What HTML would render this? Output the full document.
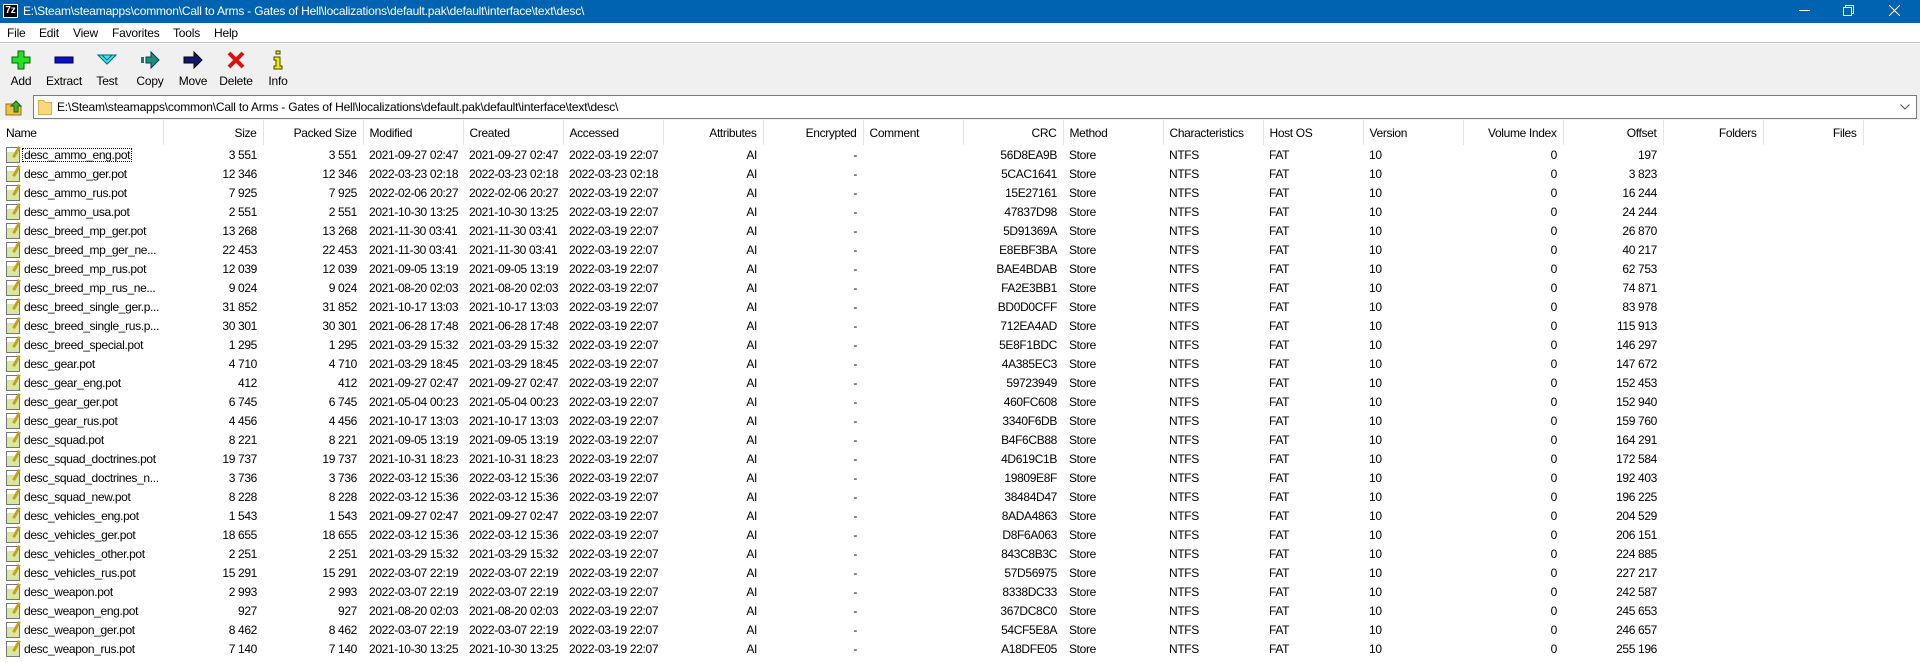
<!DOCTYPE html>
<html><head><meta charset="utf-8"><style>
*{margin:0;padding:0;box-sizing:border-box}
body{width:1920px;height:662px;overflow:hidden;background:#fff;font-family:"Liberation Sans",sans-serif;font-size:12px;color:#000;position:relative;letter-spacing:-0.2px}
.title{position:absolute;left:0;top:0;width:1920px;height:23px;background:#0063b1;color:#fff}
.title .t{position:absolute;left:23px;top:4px;font-size:12px}
.logo{position:absolute;left:3px;top:4px;width:15px;height:14px;background:#000;border:1px solid #fff;color:#fff;font-size:10px;font-weight:bold;line-height:12px;text-align:center}
.menu{position:absolute;top:23px;left:0;width:1920px;height:20px;border-bottom:1px solid #c8c8c8}
.menu span{position:absolute;top:3px}
.tb{position:absolute;top:44px;left:0;width:1920px;height:50px;background:#f0f0f0}
.tb .b{position:absolute;top:0;width:44px;text-align:center}
.tb svg{display:block;margin:6px auto 0}
.tb .l{position:absolute;top:30px;width:100%;text-align:center}
.ab{position:absolute;top:94px;left:0;width:1920px;height:26px;background:#f0f0f0}
.addr{position:absolute;left:33px;top:1px;width:1884px;height:24px;border:1px solid #7a7a7a;background:#fff}
.addr .t{position:absolute;left:23px;top:4px}
table{position:absolute;left:0;top:120px;border-collapse:collapse;table-layout:fixed;width:1920px;letter-spacing:-0.35px}
td,th{height:19px;padding:0 6px;white-space:nowrap;overflow:hidden;font-weight:normal}
th{height:25px;border-right:1px solid #e5e5e5;text-align:left}
th.r,td.r{text-align:right}
td.n{padding-left:24px;position:relative}
td.n:before{content:"";position:absolute;left:6px;top:2px;width:12px;height:14px;border:1px solid #777;background:linear-gradient(#fff 0 30%,#d8e8a0 30% 100%)}
td.n:after{content:"";position:absolute;left:15px;top:1px;width:3px;height:12px;background:#c8a020;transform:rotate(30deg)}
.f{outline:1px dotted #000;outline-offset:-1px;padding:0 2px;margin-left:-2px}
</style></head><body>
<div class="title"><div class="logo">7z</div><span class="t">E:\Steam\steamapps\common\Call to Arms - Gates of Hell\localizations\default.pak\default\interface\text\desc\</span>
<svg style="position:absolute;left:1799px;top:10px" width="11" height="2"><rect width="11" height="1" fill="#fff"/></svg>
<svg style="position:absolute;left:1843px;top:5px" width="11" height="11"><path d="M0.5 2.5h8v8h-8zM2.5 2.5v-2h8v8h-2" fill="none" stroke="#fff"/></svg>
<svg style="position:absolute;left:1889px;top:5px" width="11" height="11"><path d="M0 0L11 11M11 0L0 11" stroke="#fff"/></svg>
</div>
<div class="menu"><span style="left:7px">File</span><span style="left:39px">Edit</span><span style="left:73px">View</span><span style="left:112px">Favorites</span><span style="left:173px">Tools</span><span style="left:214px">Help</span></div>
<div class="tb">
<div class="b" style="left:-1px"><svg width="20" height="20"><path d="M7 1h6v6h6v6h-6v6h-6v-6h-6v-6h6z" fill="#22e022" stroke="#060" stroke-width="1"/></svg><div class="l">Add</div></div>
<div class="b" style="left:42px"><svg width="20" height="20"><rect x="1" y="7" width="18" height="6" fill="#0a10d0" stroke="#003"/></svg><div class="l">Extract</div></div>
<div class="b" style="left:85px"><svg width="20" height="20"><path d="M1 5h18l-9 9z" fill="#3ee8f0" stroke="#066"/><path d="M5 5l5 5 5-5" fill="none" stroke="#066"/></svg><div class="l">Test</div></div>
<div class="b" style="left:128px"><svg width="20" height="20"><rect x="1" y="7" width="3" height="6" fill="#1a7a6a"/><path d="M6 7h5v-5l8 8-8 8v-5h-5z" fill="#1e8a80" stroke="#044"/></svg><div class="l">Copy</div></div>
<div class="b" style="left:171px"><svg width="20" height="20"><path d="M1 7h10v-5l8 8-8 8v-5h-10z" fill="#101870" stroke="#000"/></svg><div class="l">Move</div></div>
<div class="b" style="left:214px"><svg width="20" height="20"><path d="M3 3L17 17M17 3L3 17" stroke="#e01010" stroke-width="4"/></svg><div class="l">Delete</div></div>
<div class="b" style="left:256px"><svg width="20" height="20"><rect x="8" y="1" width="4" height="3" fill="#ee0" stroke="#440"/><path d="M6 7h6v9h2v3h-8v-3h2v-6h-2z" fill="#ee0" stroke="#440"/></svg><div class="l">Info</div></div>
</div>
<div class="ab">
<svg style="position:absolute;left:5px;top:4px" width="18" height="18"><path d="M1 6h6l2 2h7v9h-15z" fill="#f0c040" stroke="#a07010"/><path d="M9 14v-6h-3l5-5 5 5h-3v6z" fill="#40b030" stroke="#206010"/></svg>
<div class="addr"><svg style="position:absolute;left:4px;top:3px" width="14" height="16"><path d="M0.5 1.5h5l2 2h6v12h-13z" fill="#f8d878" stroke="#d8b050"/></svg><span class="t">E:\Steam\steamapps\common\Call to Arms - Gates of Hell\localizations\default.pak\default\interface\text\desc\</span>
<svg style="position:absolute;right:6px;top:8px" width="10" height="6"><path d="M0.5 0.5l4.5 4.5 4.5-4.5" fill="none" stroke="#555"/></svg></div>
</div>
<table>
<colgroup><col style="width:163px"><col style="width:100px"><col style="width:100px"><col style="width:100px"><col style="width:100px"><col style="width:100px"><col style="width:100px"><col style="width:100px"><col style="width:100px"><col style="width:100px"><col style="width:100px"><col style="width:100px"><col style="width:100px"><col style="width:100px"><col style="width:100px"><col style="width:100px"><col style="width:100px"><col style="width:100px"><col></colgroup>
<tr><th>Name</th><th class="r">Size</th><th class="r">Packed Size</th><th>Modified</th><th>Created</th><th>Accessed</th><th class="r">Attributes</th><th class="r">Encrypted</th><th>Comment</th><th class="r">CRC</th><th>Method</th><th>Characteristics</th><th>Host OS</th><th>Version</th><th class="r">Volume Index</th><th class="r">Offset</th><th class="r">Folders</th><th class="r">Files</th><th style="border:0"></th></tr>
<tr><td class="n"><span class="f">desc_ammo_eng.pot</span></td><td class="r">3 551</td><td class="r">3 551</td><td>2021-09-27 02:47</td><td>2021-09-27 02:47</td><td>2022-03-19 22:07</td><td class="r">AI</td><td class="r">-</td><td></td><td class="r">56D8EA9B</td><td>Store</td><td>NTFS</td><td>FAT</td><td>10</td><td class="r">0</td><td class="r">197</td><td></td><td></td><td></td></tr>
<tr><td class="n">desc_ammo_ger.pot</td><td class="r">12 346</td><td class="r">12 346</td><td>2022-03-23 02:18</td><td>2022-03-23 02:18</td><td>2022-03-23 02:18</td><td class="r">AI</td><td class="r">-</td><td></td><td class="r">5CAC1641</td><td>Store</td><td>NTFS</td><td>FAT</td><td>10</td><td class="r">0</td><td class="r">3 823</td><td></td><td></td><td></td></tr>
<tr><td class="n">desc_ammo_rus.pot</td><td class="r">7 925</td><td class="r">7 925</td><td>2022-02-06 20:27</td><td>2022-02-06 20:27</td><td>2022-03-19 22:07</td><td class="r">AI</td><td class="r">-</td><td></td><td class="r">15E27161</td><td>Store</td><td>NTFS</td><td>FAT</td><td>10</td><td class="r">0</td><td class="r">16 244</td><td></td><td></td><td></td></tr>
<tr><td class="n">desc_ammo_usa.pot</td><td class="r">2 551</td><td class="r">2 551</td><td>2021-10-30 13:25</td><td>2021-10-30 13:25</td><td>2022-03-19 22:07</td><td class="r">AI</td><td class="r">-</td><td></td><td class="r">47837D98</td><td>Store</td><td>NTFS</td><td>FAT</td><td>10</td><td class="r">0</td><td class="r">24 244</td><td></td><td></td><td></td></tr>
<tr><td class="n">desc_breed_mp_ger.pot</td><td class="r">13 268</td><td class="r">13 268</td><td>2021-11-30 03:41</td><td>2021-11-30 03:41</td><td>2022-03-19 22:07</td><td class="r">AI</td><td class="r">-</td><td></td><td class="r">5D91369A</td><td>Store</td><td>NTFS</td><td>FAT</td><td>10</td><td class="r">0</td><td class="r">26 870</td><td></td><td></td><td></td></tr>
<tr><td class="n">desc_breed_mp_ger_ne...</td><td class="r">22 453</td><td class="r">22 453</td><td>2021-11-30 03:41</td><td>2021-11-30 03:41</td><td>2022-03-19 22:07</td><td class="r">AI</td><td class="r">-</td><td></td><td class="r">E8EBF3BA</td><td>Store</td><td>NTFS</td><td>FAT</td><td>10</td><td class="r">0</td><td class="r">40 217</td><td></td><td></td><td></td></tr>
<tr><td class="n">desc_breed_mp_rus.pot</td><td class="r">12 039</td><td class="r">12 039</td><td>2021-09-05 13:19</td><td>2021-09-05 13:19</td><td>2022-03-19 22:07</td><td class="r">AI</td><td class="r">-</td><td></td><td class="r">BAE4BDAB</td><td>Store</td><td>NTFS</td><td>FAT</td><td>10</td><td class="r">0</td><td class="r">62 753</td><td></td><td></td><td></td></tr>
<tr><td class="n">desc_breed_mp_rus_ne...</td><td class="r">9 024</td><td class="r">9 024</td><td>2021-08-20 02:03</td><td>2021-08-20 02:03</td><td>2022-03-19 22:07</td><td class="r">AI</td><td class="r">-</td><td></td><td class="r">FA2E3BB1</td><td>Store</td><td>NTFS</td><td>FAT</td><td>10</td><td class="r">0</td><td class="r">74 871</td><td></td><td></td><td></td></tr>
<tr><td class="n">desc_breed_single_ger.p...</td><td class="r">31 852</td><td class="r">31 852</td><td>2021-10-17 13:03</td><td>2021-10-17 13:03</td><td>2022-03-19 22:07</td><td class="r">AI</td><td class="r">-</td><td></td><td class="r">BD0D0CFF</td><td>Store</td><td>NTFS</td><td>FAT</td><td>10</td><td class="r">0</td><td class="r">83 978</td><td></td><td></td><td></td></tr>
<tr><td class="n">desc_breed_single_rus.p...</td><td class="r">30 301</td><td class="r">30 301</td><td>2021-06-28 17:48</td><td>2021-06-28 17:48</td><td>2022-03-19 22:07</td><td class="r">AI</td><td class="r">-</td><td></td><td class="r">712EA4AD</td><td>Store</td><td>NTFS</td><td>FAT</td><td>10</td><td class="r">0</td><td class="r">115 913</td><td></td><td></td><td></td></tr>
<tr><td class="n">desc_breed_special.pot</td><td class="r">1 295</td><td class="r">1 295</td><td>2021-03-29 15:32</td><td>2021-03-29 15:32</td><td>2022-03-19 22:07</td><td class="r">AI</td><td class="r">-</td><td></td><td class="r">5E8F1BDC</td><td>Store</td><td>NTFS</td><td>FAT</td><td>10</td><td class="r">0</td><td class="r">146 297</td><td></td><td></td><td></td></tr>
<tr><td class="n">desc_gear.pot</td><td class="r">4 710</td><td class="r">4 710</td><td>2021-03-29 18:45</td><td>2021-03-29 18:45</td><td>2022-03-19 22:07</td><td class="r">AI</td><td class="r">-</td><td></td><td class="r">4A385EC3</td><td>Store</td><td>NTFS</td><td>FAT</td><td>10</td><td class="r">0</td><td class="r">147 672</td><td></td><td></td><td></td></tr>
<tr><td class="n">desc_gear_eng.pot</td><td class="r">412</td><td class="r">412</td><td>2021-09-27 02:47</td><td>2021-09-27 02:47</td><td>2022-03-19 22:07</td><td class="r">AI</td><td class="r">-</td><td></td><td class="r">59723949</td><td>Store</td><td>NTFS</td><td>FAT</td><td>10</td><td class="r">0</td><td class="r">152 453</td><td></td><td></td><td></td></tr>
<tr><td class="n">desc_gear_ger.pot</td><td class="r">6 745</td><td class="r">6 745</td><td>2021-05-04 00:23</td><td>2021-05-04 00:23</td><td>2022-03-19 22:07</td><td class="r">AI</td><td class="r">-</td><td></td><td class="r">460FC608</td><td>Store</td><td>NTFS</td><td>FAT</td><td>10</td><td class="r">0</td><td class="r">152 940</td><td></td><td></td><td></td></tr>
<tr><td class="n">desc_gear_rus.pot</td><td class="r">4 456</td><td class="r">4 456</td><td>2021-10-17 13:03</td><td>2021-10-17 13:03</td><td>2022-03-19 22:07</td><td class="r">AI</td><td class="r">-</td><td></td><td class="r">3340F6DB</td><td>Store</td><td>NTFS</td><td>FAT</td><td>10</td><td class="r">0</td><td class="r">159 760</td><td></td><td></td><td></td></tr>
<tr><td class="n">desc_squad.pot</td><td class="r">8 221</td><td class="r">8 221</td><td>2021-09-05 13:19</td><td>2021-09-05 13:19</td><td>2022-03-19 22:07</td><td class="r">AI</td><td class="r">-</td><td></td><td class="r">B4F6CB88</td><td>Store</td><td>NTFS</td><td>FAT</td><td>10</td><td class="r">0</td><td class="r">164 291</td><td></td><td></td><td></td></tr>
<tr><td class="n">desc_squad_doctrines.pot</td><td class="r">19 737</td><td class="r">19 737</td><td>2021-10-31 18:23</td><td>2021-10-31 18:23</td><td>2022-03-19 22:07</td><td class="r">AI</td><td class="r">-</td><td></td><td class="r">4D619C1B</td><td>Store</td><td>NTFS</td><td>FAT</td><td>10</td><td class="r">0</td><td class="r">172 584</td><td></td><td></td><td></td></tr>
<tr><td class="n">desc_squad_doctrines_n...</td><td class="r">3 736</td><td class="r">3 736</td><td>2022-03-12 15:36</td><td>2022-03-12 15:36</td><td>2022-03-19 22:07</td><td class="r">AI</td><td class="r">-</td><td></td><td class="r">19809E8F</td><td>Store</td><td>NTFS</td><td>FAT</td><td>10</td><td class="r">0</td><td class="r">192 403</td><td></td><td></td><td></td></tr>
<tr><td class="n">desc_squad_new.pot</td><td class="r">8 228</td><td class="r">8 228</td><td>2022-03-12 15:36</td><td>2022-03-12 15:36</td><td>2022-03-19 22:07</td><td class="r">AI</td><td class="r">-</td><td></td><td class="r">38484D47</td><td>Store</td><td>NTFS</td><td>FAT</td><td>10</td><td class="r">0</td><td class="r">196 225</td><td></td><td></td><td></td></tr>
<tr><td class="n">desc_vehicles_eng.pot</td><td class="r">1 543</td><td class="r">1 543</td><td>2021-09-27 02:47</td><td>2021-09-27 02:47</td><td>2022-03-19 22:07</td><td class="r">AI</td><td class="r">-</td><td></td><td class="r">8ADA4863</td><td>Store</td><td>NTFS</td><td>FAT</td><td>10</td><td class="r">0</td><td class="r">204 529</td><td></td><td></td><td></td></tr>
<tr><td class="n">desc_vehicles_ger.pot</td><td class="r">18 655</td><td class="r">18 655</td><td>2022-03-12 15:36</td><td>2022-03-12 15:36</td><td>2022-03-19 22:07</td><td class="r">AI</td><td class="r">-</td><td></td><td class="r">D8F6A063</td><td>Store</td><td>NTFS</td><td>FAT</td><td>10</td><td class="r">0</td><td class="r">206 151</td><td></td><td></td><td></td></tr>
<tr><td class="n">desc_vehicles_other.pot</td><td class="r">2 251</td><td class="r">2 251</td><td>2021-03-29 15:32</td><td>2021-03-29 15:32</td><td>2022-03-19 22:07</td><td class="r">AI</td><td class="r">-</td><td></td><td class="r">843C8B3C</td><td>Store</td><td>NTFS</td><td>FAT</td><td>10</td><td class="r">0</td><td class="r">224 885</td><td></td><td></td><td></td></tr>
<tr><td class="n">desc_vehicles_rus.pot</td><td class="r">15 291</td><td class="r">15 291</td><td>2022-03-07 22:19</td><td>2022-03-07 22:19</td><td>2022-03-19 22:07</td><td class="r">AI</td><td class="r">-</td><td></td><td class="r">57D56975</td><td>Store</td><td>NTFS</td><td>FAT</td><td>10</td><td class="r">0</td><td class="r">227 217</td><td></td><td></td><td></td></tr>
<tr><td class="n">desc_weapon.pot</td><td class="r">2 993</td><td class="r">2 993</td><td>2022-03-07 22:19</td><td>2022-03-07 22:19</td><td>2022-03-19 22:07</td><td class="r">AI</td><td class="r">-</td><td></td><td class="r">8338DC33</td><td>Store</td><td>NTFS</td><td>FAT</td><td>10</td><td class="r">0</td><td class="r">242 587</td><td></td><td></td><td></td></tr>
<tr><td class="n">desc_weapon_eng.pot</td><td class="r">927</td><td class="r">927</td><td>2021-08-20 02:03</td><td>2021-08-20 02:03</td><td>2022-03-19 22:07</td><td class="r">AI</td><td class="r">-</td><td></td><td class="r">367DC8C0</td><td>Store</td><td>NTFS</td><td>FAT</td><td>10</td><td class="r">0</td><td class="r">245 653</td><td></td><td></td><td></td></tr>
<tr><td class="n">desc_weapon_ger.pot</td><td class="r">8 462</td><td class="r">8 462</td><td>2022-03-07 22:19</td><td>2022-03-07 22:19</td><td>2022-03-19 22:07</td><td class="r">AI</td><td class="r">-</td><td></td><td class="r">54CF5E8A</td><td>Store</td><td>NTFS</td><td>FAT</td><td>10</td><td class="r">0</td><td class="r">246 657</td><td></td><td></td><td></td></tr>
<tr><td class="n">desc_weapon_rus.pot</td><td class="r">7 140</td><td class="r">7 140</td><td>2021-10-30 13:25</td><td>2021-10-30 13:25</td><td>2022-03-19 22:07</td><td class="r">AI</td><td class="r">-</td><td></td><td class="r">A18DFE05</td><td>Store</td><td>NTFS</td><td>FAT</td><td>10</td><td class="r">0</td><td class="r">255 196</td><td></td><td></td><td></td></tr>
</table>
</body></html>
